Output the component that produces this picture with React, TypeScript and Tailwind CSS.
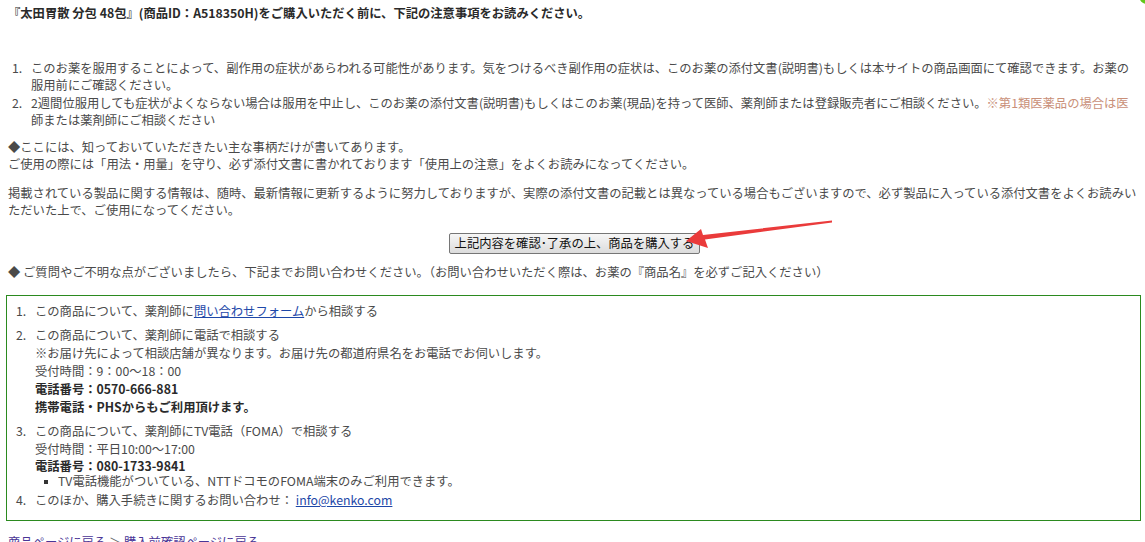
import React from 'react';

const listNum = 'shrink-0 w-[23px] pl-[4px]';
const boxNum = 'shrink-0 w-[28px] pl-[9px]';

function RedArrow() {
  // annotation drawn over the page
  return (
    <svg
      className="absolute left-0 top-0 pointer-events-none"
      width="1145"
      height="542"
      viewBox="0 0 1145 542"
    >
      <polygon
        points="686,241 701,229 703,235 832,220.5 832,222.5 705,239.5 708,248"
        fill="#ea3b3b"
      />
    </svg>
  );
}

export default function App() {
  return (
    <div
      className="relative w-[1145px] h-[542px] overflow-hidden bg-white px-[8px] pt-[5px] text-[12.3px] leading-[17.5px] text-[#4a4a4a]"
      style={{ fontFamily: '"Noto Sans CJK JP", "Noto Sans", sans-serif' }}
    >
      {/* corner blob */}
      <div className="absolute right-[-10px] top-[-12px] w-[16px] h-[16px] rounded-full bg-[#62c81a]" />

      <p className="font-bold text-[#2a2a2a] whitespace-nowrap">
        『太田胃散 分包 48包』(商品ID：A518350H)をご購入いただく前に、下記の注意事項をお読みください。
      </p>

      {/* caution list */}
      <ol className="mt-[37px]">
        <li className="flex">
          <span className={listNum}>1.</span>
          <span className="whitespace-nowrap">
            このお薬を服用することによって、副作用の症状があらわれる可能性があります。気をつけるべき副作用の症状は、このお薬の添付文書(説明書)もしくは本サイトの商品画面にて確認できます。お薬の
            <br />
            服用前にご確認ください。
          </span>
        </li>
        <li className="flex">
          <span className={listNum}>2.</span>
          <span className="whitespace-nowrap">
            2週間位服用しても症状がよくならない場合は服用を中止し、このお薬の添付文書(説明書)もしくはこのお薬(現品)を持って医師、薬剤師または登録販売者にご相談ください。
            <span className="text-[#c98f78]">※第1類医薬品の場合は医</span>
            <br />
            師または薬剤師にご相談ください
          </span>
        </li>
      </ol>

      <p className="mt-[9px] whitespace-nowrap">
        ◆ここには、知っておいていただきたい主な事柄だけが書いてあります。
        <br />
        ご使用の際には「用法・用量」を守り、必ず添付文書に書かれております「使用上の注意」をよくお読みになってください。
      </p>

      <p className="mt-[11px] whitespace-nowrap">
        掲載されている製品に関する情報は、随時、最新情報に更新するように努力しておりますが、実際の添付文書の記載とは異なっている場合もございますので、必ず製品に入っている添付文書をよくお読みい
        <br />
        ただいた上で、ご使用になってください。
      </p>

      <div className="mt-[13px] flex justify-center">
        <button
          type="button"
          className="h-[21px] px-[5px] ml-[4px] border border-[#767676] rounded-[2px] bg-gradient-to-b from-[#f6f6f6] to-[#dcdcdc] text-[#111] text-[12.3px] leading-none whitespace-nowrap"
        >
          上記内容を確認･了承の上、商品を購入する
        </button>
      </div>

      <p className="mt-[10px] whitespace-nowrap">
        ◆ ご質問やご不明な点がございましたら、下記までお問い合わせください。（お問い合わせいただく際は、お薬の『商品名』を必ずご記入ください）
      </p>

      {/* contact box */}
      <div className="mt-[14px] ml-[-2px] mr-[-4px] border border-[#2b8a1f] pt-[6px] pb-[11px] leading-[18px]">
        <div className="flex">
          <span className={boxNum}>1.</span>
          <span>
            この商品について、薬剤師に
            <a href="#" className="text-[#1d47a8] underline">
              問い合わせフォーム
            </a>
            から相談する
          </span>
        </div>

        <div className="flex mt-[6px]">
          <span className={boxNum}>2.</span>
          <div>
            <p>この商品について、薬剤師に電話で相談する</p>
            <p>※お届け先によって相談店舗が異なります。お届け先の都道府県名をお電話でお伺いします。</p>
            <p>受付時間：9：00～18：00</p>
            <p className="font-bold text-[#2a2a2a]">電話番号：0570-666-881</p>
            <p className="font-bold text-[#2a2a2a]">携帯電話・PHSからもご利用頂けます。</p>
          </div>
        </div>

        <div className="flex mt-[6px]">
          <span className={boxNum}>3.</span>
          <div>
            <p>この商品について、薬剤師にTV電話（FOMA）で相談する</p>
            <p>受付時間：平日10:00～17:00</p>
            <p className="font-bold text-[#2a2a2a] leading-[17px]">電話番号：080-1733-9841</p>
            <ul className="leading-[13px]">
              <li className="flex items-center">
                <span className="w-[4px] h-[4px] bg-[#333] ml-[9px] mr-[10px]" />
                TV電話機能がついている、NTTドコモのFOMA端末のみご利用できます。
              </li>
            </ul>
          </div>
        </div>

        <div className="flex mt-[3px]">
          <span className={boxNum}>4.</span>
          <span>
            このほか、購入手続きに関するお問い合わせ：{' '}
            <a href="#" className="text-[#1d47a8] underline">
              info@kenko.com
            </a>
          </span>
        </div>
      </div>

      <p className="mt-[13px] whitespace-nowrap">
        <a href="#" className="text-[#4a3596]">商品ページに戻る</a>
        <span className="text-[#666]"> ＞ </span>
        <a href="#" className="text-[#4a3596]">購入前確認ページに戻る</a>
      </p>

      <RedArrow />
    </div>
  );
}
